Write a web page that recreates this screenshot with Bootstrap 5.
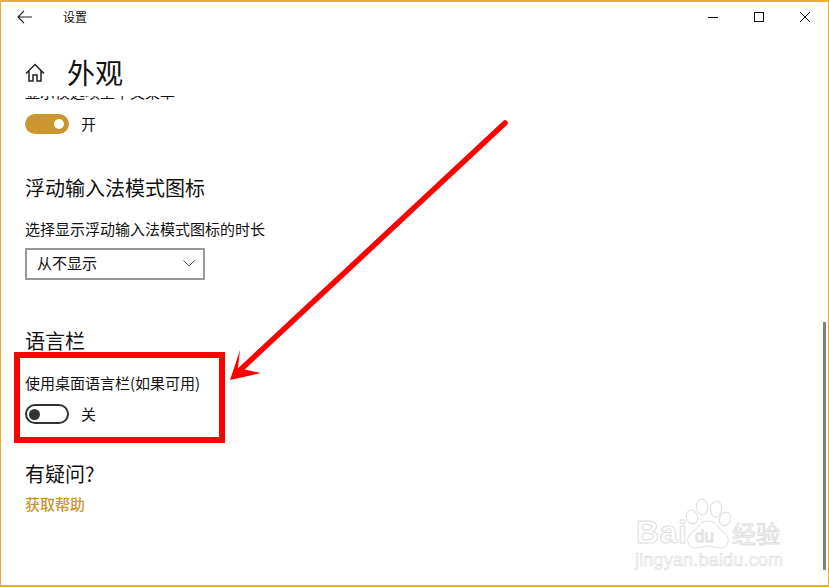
<!DOCTYPE html>
<html lang="zh-CN">
<head>
<meta charset="UTF-8" />
<meta name="viewport" content="width=device-width, initial-scale=1" />
<title>设置 - 外观</title>
<link href="https://cdn.jsdelivr.net/npm/bootstrap@5.3.0/dist/css/bootstrap.min.css" rel="stylesheet" />
<style>
  html, body { height: 100%; overflow: hidden; }
  body {
    background: #fff;
    color: #111;
    font-family: "Noto Sans CJK SC", "Liberation Sans", sans-serif;
    font-size: 15px;
    line-height: 20px;
  }
  .win {
    position: relative;
    width: 829px;
    height: 587px;
    border: 1px solid #e8ae3c;
    border-top-width: 2px;
    border-bottom-width: 2px;
    overflow: hidden;
  }
  .titlebar { height: 30px; padding-left: 16px; }
  .titlebar .back { width: 16px; height: 14px; margin-right: 30px; }
  .titlebar .name { font-size: 12px; }
  .winbtns { margin-left: auto; }
  .winbtn { width: 46px; height: 30px; }
  .pagehead { height: 64px; padding-left: 24px; padding-top: 16px; }
  .pagehead svg { margin-right: 22px; margin-top: 2px; }
  .pagehead h1 { font-size: 28px; line-height: 40px; font-weight: 400; margin: 0; }
  .scroller { height: 489px; padding-left: 24px; overflow: hidden; position: relative; }
  .clipped { height: 5px; overflow: hidden; position: relative; }
  .clipped span { position: absolute; left: 0; bottom: -1px; white-space: nowrap; }
  .sw { width: 44px; height: 20px; border-radius: 10px; padding: 0 5px; }
  .sw i { display: block; width: 10px; height: 10px; border-radius: 50%; }
  .sw-on { background: #cb962d; }
  .sw-on i { background: #fff; margin-left: auto; }
  .sw-off { border: 2px solid #333; padding: 0 2px; }
  .sw-off i { background: #333; width: 11px; height: 11px; }
  .swrow { gap: 12px; }
  .sec-title { font-size: 20px; line-height: 28px; font-weight: 400; margin: 0; }
  .picker {
    width: 180px;
    height: 32px;
    border: 2px solid #999;
    padding: 0 8px 2px 10px;
    background: #fff;
  }
  .helplink { color: #c9962d; font-weight: 500; text-decoration: none; }
  .s1 { margin-top: 13px; }
  .s2 { margin-top: 40px; }
  .s3 { margin-top: 17px; }
  .s4 { margin-top: 9px; }
  .s5 { margin-top: 47px; }
  .s6 { margin-top: 18px; }
  .s7 { margin-top: 11px; }
  .s8 { margin-top: 36px; }
  .s9 { margin-top: 6px; }
  .pane-bar { position: absolute; right: 2px; top: 320px; width: 3px; height: 248px; background: #7f7f7f; }
  .redbox { position: absolute; left: 13px; top: 350px; width: 211px; height: 91px; border: 6px solid #f00; }
  .overlay { position: absolute; left: -1px; top: -2px; pointer-events: none; }
  .wm { font-family: "Liberation Sans", "Noto Sans CJK SC", sans-serif; fill: #fff; stroke: #dedede; stroke-width: 1px; }
</style>
</head>
<body>

<div class="win">
  <div class="titlebar d-flex align-items-center">
    <svg class="back" viewBox="0 0 16 14"><path d="M7 1 1 7l6 6M1 7h14" fill="none" stroke="#222" stroke-width="1.1"/></svg>
    <span class="name">设置</span>
    <div class="winbtns d-flex">
      <div class="winbtn d-flex align-items-center justify-content-center"><svg width="10" height="10"><path d="M0 5.5h10" stroke="#111"/></svg></div>
      <div class="winbtn d-flex align-items-center justify-content-center"><svg width="10" height="10"><rect x=".5" y=".5" width="9" height="9" fill="none" stroke="#111"/></svg></div>
      <div class="winbtn d-flex align-items-center justify-content-center"><svg width="10" height="10"><path d="M0 0l10 10M10 0 0 10" stroke="#111"/></svg></div>
    </div>
  </div>

  <div class="pagehead d-flex align-items-center">
    <svg width="20" height="20" viewBox="0 0 20 20"><path d="M1 10.5 10 1.5l9 9M4 8v10h4v-6h4v6h4V8" fill="none" stroke="#222" stroke-width="1.5"/></svg>
    <h1>外观</h1>
  </div>

  <div class="scroller">
    <div class="clipped"><span>显示模选项上下文菜单</span></div>
    <div class="d-flex align-items-center swrow s1">
      <div class="sw sw-on d-flex align-items-center"><i></i></div>
      <span>开</span>
    </div>

    <h2 class="sec-title s2">浮动输入法模式图标</h2>
    <div class="s3">选择显示浮动输入法模式图标的时长</div>
    <div class="picker d-flex align-items-center justify-content-between s4">
      <span>从不显示</span>
      <svg width="12" height="7" viewBox="0 0 12 7"><path d="M.5.5l5.5 5.5L11.5.5" fill="none" stroke="#555"/></svg>
    </div>

    <h2 class="sec-title s5">语言栏</h2>
    <div class="s6">使用桌面语言栏(如果可用)</div>
    <div class="d-flex align-items-center swrow s7">
      <div class="sw sw-off d-flex align-items-center"><i></i></div>
      <span>关</span>
    </div>

    <h2 class="sec-title s8">有疑问?</h2>
    <div class="s9"><a class="helplink" href="#">获取帮助</a></div>
  </div>

  <div class="pane-bar"></div>
  <div class="redbox"></div>

  <svg class="overlay" width="829" height="587" viewBox="0 0 829 587">
    <path d="M505 123 238 372" stroke="#f00" stroke-width="5.5" stroke-linecap="round" fill="none"/>
    <polygon points="230,380 240,350 238,368 261,373" fill="#f00"/>
    <g class="wm">
      <text x="636" y="543" font-size="32" font-weight="700" textLength="51">Bai</text>
      <text x="732" y="543" font-size="24" style="font-family:'Noto Sans CJK SC',sans-serif">经验</text>
      <text x="635" y="566" font-size="18" stroke-width=".7" textLength="148">jingyan.baidu.com</text>
    </g>
    <g fill="#fff" stroke="#dedede" stroke-width="1">
      <ellipse cx="692" cy="517" rx="5.5" ry="7" transform="rotate(-20 692 517)"/>
      <ellipse cx="702" cy="507" rx="5.5" ry="8" transform="rotate(-5 702 507)"/>
      <ellipse cx="716" cy="509" rx="5.5" ry="8" transform="rotate(5 716 509)"/>
      <ellipse cx="725" cy="519" rx="5.5" ry="7" transform="rotate(20 725 519)"/>
      <path d="M708 521c-7 0-9 5-14 10-6 4-7 8-6 11 1 5 5 6 9 6 4 0 8-2 11-2s7 2 11 2c4 0 8-1 9-6 1-3 0-7-6-11-5-5-7-10-14-10z"/>
    </g>
    <text class="wm" x="695" y="542" font-size="17">du</text>
  </svg>
</div>

<script src="https://cdn.jsdelivr.net/npm/bootstrap@5.3.0/dist/js/bootstrap.bundle.min.js"></script>
</body>
</html>
